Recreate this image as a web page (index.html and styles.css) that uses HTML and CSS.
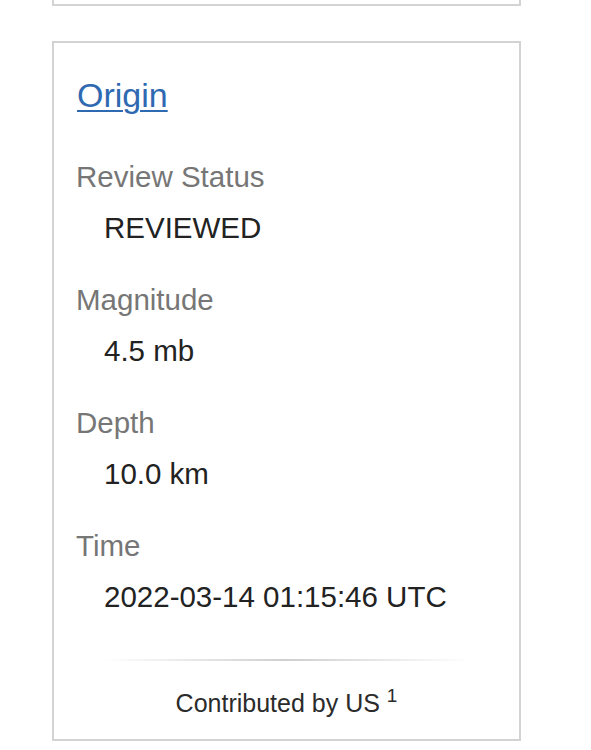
FILE: index.html
```html
<!DOCTYPE html>
<html lang="en">
<head>
  <meta charset="UTF-8">
  <meta name="viewport" content="width=device-width, initial-scale=1.0">
  <title>Origin</title>
  <link rel="stylesheet" href="styles.css">
</head>
<body>
  <!-- previous summary card, only its bottom edge is visible -->
  <div class="card card-prev"></div>

  <div class="card">
    <h2><a href="#origin">Origin</a></h2>
    <dl class="fields">
      <dt>Review Status</dt>
      <dd>REVIEWED</dd>
      <dt>Magnitude</dt>
      <dd>4.5 mb</dd>
      <dt>Depth</dt>
      <dd>10.0 km</dd>
      <dt>Time</dt>
      <dd>2022-03-14 01:15:46 UTC</dd>
    </dl>
    <div class="divider"></div>
    <p class="contributed">Contributed by US <sup>1</sup></p>
  </div>
</body>
</html>
```

FILE: styles.css
```css
/* Global Styles */
body {
  font-family: 'Liberation Sans', Arial, sans-serif;
  margin: 0;
  padding: 0;
  background: #ffffff;
  color: #222222;
}

.card {
  box-sizing: border-box;
  width: 469px;
  margin: 35px 0 0 52px;
  padding: 32px 22px 21px;
  border: 2px solid #d3d3d3;
  background: #ffffff;
}

.card-prev {
  height: 6px;
  margin-top: 0;
  padding: 0;
  border-top: none;
}

h2 {
  margin: 0 0 0 1px;
  font-size: 34px;
  line-height: 40px;
  font-weight: normal;
}

h2 a {
  color: #2f69b1;
  text-decoration: underline;
  text-decoration-thickness: 2px;
  text-underline-offset: 3px;
}

/* Field list */
.fields {
  margin: 44px 0 0;
}

.fields dt {
  font-size: 29.5px;
  line-height: 36px;
  color: #767676;
}

.fields dd {
  margin: 15px 0 36px 28px;
  font-size: 29.5px;
  line-height: 36px;
  color: #222222;
}

.fields dd:last-child {
  margin-bottom: 0;
}

.divider {
  height: 2px;
  margin: 44px 27px 0;
  background: linear-gradient(90deg, rgba(200, 200, 200, 0), #cfcfcf 50%, rgba(200, 200, 200, 0));
}

.contributed {
  margin: 27px 0 0;
  font-size: 25px;
  line-height: 30px;
  text-align: center;
  color: #2b2b2b;
}

.contributed sup {
  font-size: 19px;
  line-height: 0;
  vertical-align: 10px;
}
```
